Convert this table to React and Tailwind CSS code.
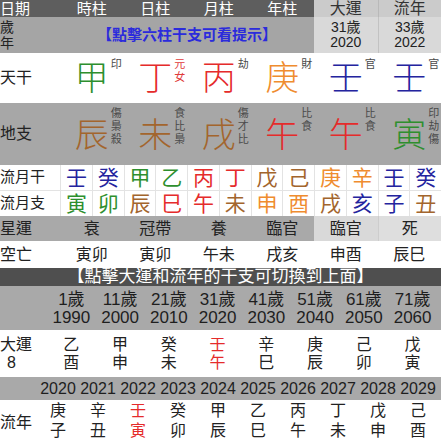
import React from 'react';

const K = {
  g: 'text-[#2e8f2e]',
  r: 'text-[#e52b2b]',
  b: 'text-[#a3652d]',
  o: 'text-[#ef8c2f]',
  u: 'text-[#24249e]',
};

const pillars = ['時柱', '日柱', '月柱', '年柱'];

const stems = [
  { c: '甲', k: 'g', s: ['印'] },
  { c: '丁', k: 'r', s: ['元', '女'], red: true },
  { c: '丙', k: 'r', s: ['劫'] },
  { c: '庚', k: 'o', s: ['財'] },
  { c: '壬', k: 'u', s: ['官'] },
  { c: '壬', k: 'u', s: ['官'] },
];

const branches = [
  { c: '辰', k: 'b', s: ['傷', '梟', '殺'] },
  { c: '未', k: 'b', s: ['食', '比', '梟'] },
  { c: '戌', k: 'b', s: ['傷', '才', '比'] },
  { c: '午', k: 'r', s: ['比', '食'] },
  { c: '午', k: 'r', s: ['比', '食'] },
  { c: '寅', k: 'g', s: ['印', '劫', '傷'] },
];

const monthStems = [['壬', 'u'], ['癸', 'u'], ['甲', 'g'], ['乙', 'g'], ['丙', 'r'], ['丁', 'r'], ['戊', 'b'], ['己', 'b'], ['庚', 'o'], ['辛', 'o'], ['壬', 'u'], ['癸', 'u']];
const monthBranches = [['寅', 'g'], ['卯', 'g'], ['辰', 'b'], ['巳', 'r'], ['午', 'r'], ['未', 'b'], ['申', 'o'], ['酉', 'o'], ['戌', 'b'], ['亥', 'u'], ['子', 'u'], ['丑', 'b']];

const xingyun = ['衰', '冠帶', '養', '臨官'];
const kongwang = ['寅卯', '寅卯', '午未', '戌亥', '申酉', '辰巳'];

const dayun = [
  ['1歲', '1990', '乙', '酉'],
  ['11歲', '2000', '甲', '申'],
  ['21歲', '2010', '癸', '未'],
  ['31歲', '2020', '壬', '午'],
  ['41歲', '2030', '辛', '巳'],
  ['51歲', '2040', '庚', '辰'],
  ['61歲', '2050', '己', '卯'],
  ['71歲', '2060', '戊', '寅'],
];

const liunian = [
  ['2020', '庚', '子'],
  ['2021', '辛', '丑'],
  ['2022', '壬', '寅'],
  ['2023', '癸', '卯'],
  ['2024', '甲', '辰'],
  ['2025', '乙', '巳'],
  ['2026', '丙', '午'],
  ['2027', '丁', '未'],
  ['2028', '戊', '申'],
  ['2029', '己', '酉'],
];

function BigChar({ c, k, s, red, top }) {
  return (
    <div className="flex items-center justify-center">
      <span className={`relative text-[34px] leading-[34px] font-light ${K[k]}`}>
        {c}
        <span
          className={`absolute left-[calc(100%+2px)] flex flex-col whitespace-nowrap font-normal text-[11px] leading-[13px] ${top} ${red ? 'text-[#e03a3a]' : 'text-[#4a4a4a]'}`}
        >
          {s.map((x, i) => (
            <span key={i}>{x}</span>
          ))}
        </span>
      </span>
    </div>
  );
}

export default function App() {
  return (
    <div className="w-[441px] h-[445px] overflow-hidden bg-white text-[#222] [font-family:'Liberation_Sans','Noto_Sans_CJK_TC',sans-serif]">
      {/* top table */}
      <div className="grid grid-cols-[60px_repeat(6,1fr)]">
        {/* header */}
        <div className="h-[17px] bg-[#5e5e5e] text-white text-[15px] leading-[17px]">日期</div>
        {pillars.map((p) => (
          <div key={p} className="h-[17px] bg-[#5e5e5e] text-white text-[15px] leading-[17px] text-center">
            {p}
          </div>
        ))}
        <div className="h-[17px] bg-[#cbcbcb] text-[#333] text-[16px] leading-[17px] text-center">大運</div>
        <div className="h-[17px] bg-[#cbcbcb] text-[#333] text-[16px] leading-[17px] text-center border-l border-[#b9b9b9]">流年</div>

        {/* age row */}
        <div className="h-[36px] bg-[#a5a5a5] flex flex-col justify-center text-[14px] leading-[16px] text-[#222]">
          <span>歲</span>
          <span>年</span>
        </div>
        <div className="col-span-4 h-[36px] bg-[#a5a5a5] flex items-center justify-center text-[15px] font-bold text-[#2b2bdc]">
          【點擊六柱干支可看提示】
        </div>
        <div className="h-[36px] bg-[#d9d9d9] flex flex-col items-center justify-center text-[14px] leading-[15px] text-[#222]">
          <span>31歲</span>
          <span>2020</span>
        </div>
        <div className="h-[36px] bg-[#d9d9d9] flex flex-col items-center justify-center text-[14px] leading-[15px] text-[#222] border-l border-[#c2c2c2]">
          <span>33歲</span>
          <span>2022</span>
        </div>

        {/* stems */}
        <div className="h-[50px] flex items-center text-[16px]">天干</div>
        {stems.map((s, i) => (
          <div key={i} className="h-[50px] flex items-center justify-center">
            <BigChar {...s} top="top-[-3px]" />
          </div>
        ))}

        {/* branches */}
        <div className="h-[62px] bg-[#a7a7a7] flex items-center text-[16px]">地支</div>
        {branches.map((s, i) => (
          <div key={i} className="h-[62px] bg-[#a7a7a7] flex items-center justify-center pt-[2px]">
            <BigChar {...s} top="top-[-11px]" />
          </div>
        ))}
      </div>

      {/* monthly rows */}
      <div className="grid grid-cols-[60px_repeat(12,1fr)]">
        <div className="h-[25px] flex items-center text-[15px]">流月干</div>
        {monthStems.map(([c, k], i) => (
          <div key={i} className={`h-[25px] flex items-center justify-center border-l border-[#e3e3e3] text-[21px] ${K[k]}`}>
            {c}
          </div>
        ))}
        <div className="h-[26px] flex items-center text-[15px] border-t border-[#e3e3e3]">流月支</div>
        {monthBranches.map(([c, k], i) => (
          <div key={i} className={`h-[26px] flex items-center justify-center border-l border-t border-[#e3e3e3] text-[21px] ${K[k]}`}>
            {c}
          </div>
        ))}
      </div>

      {/* xingyun + kongwang */}
      <div className="grid grid-cols-[60px_repeat(6,1fr)]">
        <div className="h-[25px] bg-[#a9a9a9] flex items-center text-[16px]">星運</div>
        {xingyun.map((x, i) => (
          <div key={i} className="h-[25px] bg-[#a9a9a9] flex items-center justify-center text-[16px]">
            {x}
          </div>
        ))}
        <div className="h-[25px] bg-[#d9d9d9] flex items-center justify-center text-[16px]">臨官</div>
        <div className="h-[25px] bg-[#dedede] flex items-center justify-center text-[16px] border-l border-[#cdcdcd]">死</div>

        <div className="h-[27px] flex items-center text-[16px]">空亡</div>
        {kongwang.map((x, i) => (
          <div key={i} className="h-[27px] flex items-center justify-center text-[16px]">
            {x}
          </div>
        ))}
      </div>

      {/* banner */}
      <div className="h-[18px] bg-[#4f4f4f] text-white text-[17px] leading-[18px] text-center">
        【點擊大運和流年的干支可切換到上面】
      </div>

      {/* dayun ages */}
      <div className="grid grid-cols-[47px_repeat(8,1fr)] pr-[4px] h-[44px] bg-[#a9a9a9] pt-[5px]">
        <div />
        {dayun.map(([a, y], i) => (
          <div key={i} className="flex flex-col items-center text-[17px] leading-[18px] text-[#1e1e1e]">
            <span>{a}</span>
            <span>{y}</span>
          </div>
        ))}
      </div>

      {/* dayun pillars */}
      <div className="grid grid-cols-[47px_repeat(8,1fr)] pr-[4px] h-[47px] pt-[6px]">
        <div className="flex flex-col text-[16px] leading-[18px]">
          <span>大運</span>
          <span className="pl-[7px]">8</span>
        </div>
        {dayun.map(([, , s, b], i) => (
          <div key={i} className={`flex flex-col items-center text-[16px] leading-[18px] ${i === 3 ? 'text-[#e52b2b]' : 'text-[#222]'}`}>
            <span>{s}</span>
            <span>{b}</span>
          </div>
        ))}
      </div>

      {/* liunian years */}
      <div className="grid grid-cols-[38px_repeat(10,1fr)] pr-[3px] h-[23px] bg-[#a9a9a9]">
        <div />
        {liunian.map(([y], i) => (
          <div key={i} className="flex items-center justify-center text-[16px] text-[#1e1e1e]">
            {y}
          </div>
        ))}
      </div>

      {/* liunian pillars */}
      <div className="grid grid-cols-[38px_repeat(10,1fr)] pr-[3px] h-[45px]">
        <div className="flex items-center text-[16px]">流年</div>
        {liunian.map(([, s, b], i) => (
          <div key={i} className={`flex flex-col items-center pt-[1px] text-[16px] leading-[20px] ${i === 2 ? 'text-[#e52b2b]' : 'text-[#222]'}`}>
            <span>{s}</span>
            <span>{b}</span>
          </div>
        ))}
      </div>
    </div>
  );
}
